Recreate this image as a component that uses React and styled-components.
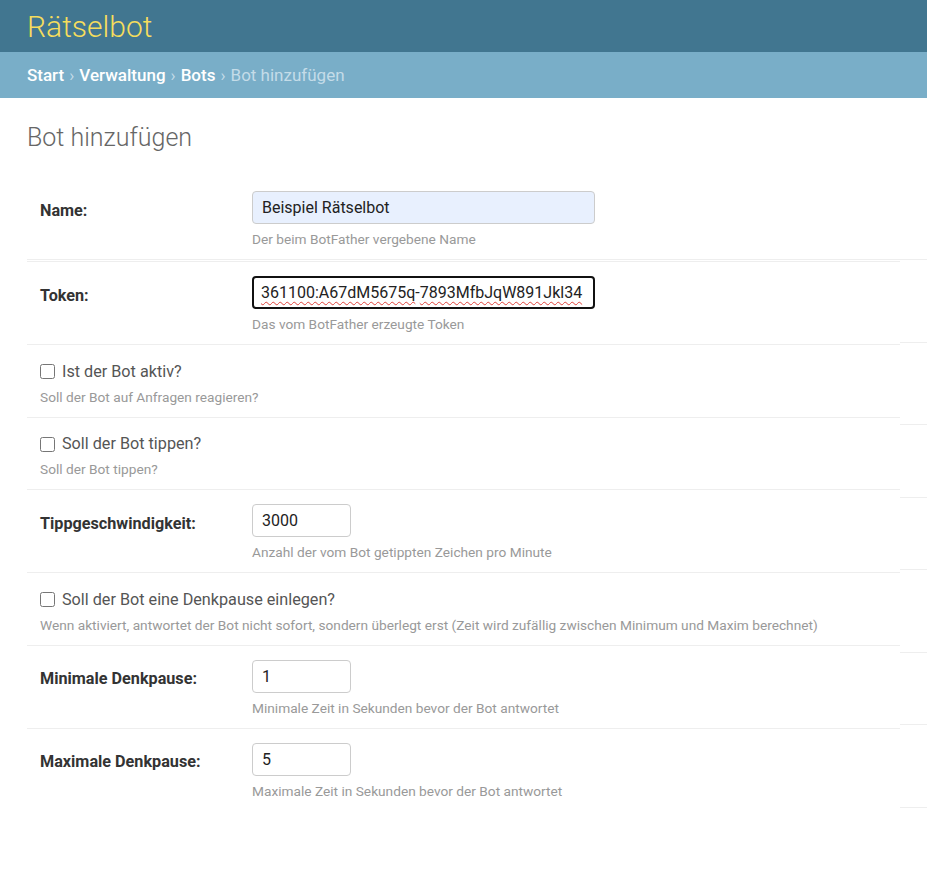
import React from "react";
import styled, { createGlobalStyle } from "styled-components";

const GlobalStyle = createGlobalStyle`
  * { box-sizing: border-box; }
  body {
    margin: 0;
    background: #fff;
    font-family: Roboto, "Liberation Sans", Arial, sans-serif;
    color: #333;
  }
`;

const fields = [
  { kind: "text", label: "Name:", value: "Beispiel Rätselbot", help: "Der beim BotFather vergebene Name", autofill: true, double: true },
  { kind: "text", label: "Token:", value: "361100:A67dM5675q-7893MfbJqW891Jkl34", help: "Das vom BotFather erzeugte Token", focus: true },
  { kind: "check", label: "Ist der Bot aktiv?", help: "Soll der Bot auf Anfragen reagieren?" },
  { kind: "check", label: "Soll der Bot tippen?", help: "Soll der Bot tippen?" },
  { kind: "number", label: "Tippgeschwindigkeit:", value: "3000", help: "Anzahl der vom Bot getippten Zeichen pro Minute" },
  { kind: "check", label: "Soll der Bot eine Denkpause einlegen?", help: "Wenn aktiviert, antwortet der Bot nicht sofort, sondern überlegt erst (Zeit wird zufällig zwischen Minimum und Maxim berechnet)" },
  { kind: "number", label: "Minimale Denkpause:", value: "1", help: "Minimale Zeit in Sekunden bevor der Bot antwortet" },
  { kind: "number", label: "Maximale Denkpause:", value: "5", help: "Maximale Zeit in Sekunden bevor der Bot antwortet", last: true },
];

// the thin strip on the right edge has its lines offset from the form rows
const edgeRows = [82, 83, 82, 73, 72, 83, 72, 83, 4];

function App() {
  return (
    <>
      <GlobalStyle />
      <Header>
        <Branding>Rätselbot</Branding>
      </Header>
      <Breadcrumbs>
        <Crumb href="#">Start</Crumb>
        <Sep>›</Sep>
        <Crumb href="#">Verwaltung</Crumb>
        <Sep>›</Sep>
        <Crumb href="#">Bots</Crumb>
        <Sep>›</Sep>
        <Current>Bot hinzufügen</Current>
      </Breadcrumbs>
      <Content>
        <Title>Bot hinzufügen</Title>
        <FormArea>
          <Fieldset>
            {fields.map((f) => (
              <Row key={f.label} $double={f.double} $last={f.last}>
                {f.kind === "check" ? (
                  <>
                    <CheckLabel>
                      <Checkbox type="checkbox" />
                      {f.label}
                    </CheckLabel>
                    <Help $full>{f.help}</Help>
                  </>
                ) : (
                  <>
                    <Label>{f.label}</Label>
                    <InputBox $small={f.kind === "number"}>
                      <Input
                        defaultValue={f.value}
                        $autofill={f.autofill}
                        $focus={f.focus}
                        spellCheck={false}
                      />
                      {f.focus && (
                        <Squiggles>
                          <Wavy>361100:A67dM5675q</Wavy>-<Wavy>7893MfbJqW891Jkl34</Wavy>
                        </Squiggles>
                      )}
                    </InputBox>
                    <Help>{f.help}</Help>
                  </>
                )}
              </Row>
            ))}
          </Fieldset>
          <Edge>
            {edgeRows.map((h, i) => (
              <EdgeCell key={i} $h={h} $line={i > 0} />
            ))}
          </Edge>
        </FormArea>
      </Content>
    </>
  );
}

export default App;

const Header = styled.div`
  height: 52px;
  background: #417690;
  display: flex;
  align-items: center;
  padding: 0 27px;
`;

const Branding = styled.h1`
  margin: 0;
  font-size: 30px;
  font-weight: 300;
  color: #f5dd5d;
`;

const Breadcrumbs = styled.div`
  height: 46px;
  background: #79aec8;
  display: flex;
  align-items: center;
  padding: 0 27px;
  font-size: 17px;
  color: #c4dce8;
`;

const Crumb = styled.a`
  color: #fff;
  font-weight: 500;
  text-decoration: none;
`;

const Sep = styled.span`
  margin: 0 5px;
  color: #c4dce8;
`;

const Current = styled.span`
  color: #c4dce8;
`;

const Content = styled.div`
  padding-left: 27px;
`;

const Title = styled.h2`
  margin: 25px 0 24px;
  font-size: 25px;
  line-height: 30px;
  font-weight: 300;
  color: #666;
`;

const FormArea = styled.div`
  display: grid;
  grid-template-columns: 1fr 27px;
`;

const Fieldset = styled.div`
  display: flex;
  flex-direction: column;
`;

const Row = styled.div`
  display: grid;
  grid-template-columns: 212px 1fr;
  align-items: center;
  row-gap: 7px;
  padding: 14px 13px 12px;
  border-bottom: ${(p) =>
    p.$last ? "none" : p.$double ? "3px double #eee" : "1px solid #eee"};
`;

const Label = styled.label`
  padding-top: 5px;
  font-size: 16.2px;
  font-weight: 700;
  color: #333;
`;

const CheckLabel = styled.label`
  grid-column: 1 / -1;
  display: flex;
  align-items: center;
  gap: 7px;
  font-size: 16.2px;
  line-height: 20px;
  color: #555;
  margin-top: 2.5px;
`;

const Checkbox = styled.input`
  width: 15px;
  height: 15px;
  margin: 0;
`;

const InputBox = styled.div`
  position: relative;
  width: ${(p) => (p.$small ? "99px" : "343px")};
  height: 33px;
`;

const Input = styled.input`
  width: 100%;
  height: 100%;
  font-family: Roboto, "Liberation Sans", Arial, sans-serif;
  font-size: 16px;
  color: #222;
  border-radius: 4px;
  border: ${(p) => (p.$focus ? "2px solid #111" : "1px solid #ccc")};
  padding: 0 8px 0 ${(p) => (p.$focus ? "7px" : "9px")};
  background: ${(p) => (p.$autofill ? "#e8f0fe" : "#fff")};
  outline: none;
`;

// spell-check marks drawn over the focused token field
const Squiggles = styled.div`
  position: absolute;
  left: 9px;
  top: 0;
  height: 100%;
  display: flex;
  align-items: center;
  font-size: 16px;
  color: transparent;
  pointer-events: none;
  white-space: pre;
`;

const Wavy = styled.span`
  text-decoration: underline wavy #e0423a;
  text-decoration-thickness: 1px;
  text-underline-offset: 3px;
`;

const Help = styled.div`
  grid-column: ${(p) => (p.$full ? "1 / -1" : "2")};
  font-size: 13.7px;
  line-height: 16px;
  color: #999;
`;

const Edge = styled.div`
  display: flex;
  flex-direction: column;
`;

const EdgeCell = styled.div`
  height: ${(p) => p.$h}px;
  border-top: ${(p) => (p.$line ? "1px solid #eee" : "none")};
`;
